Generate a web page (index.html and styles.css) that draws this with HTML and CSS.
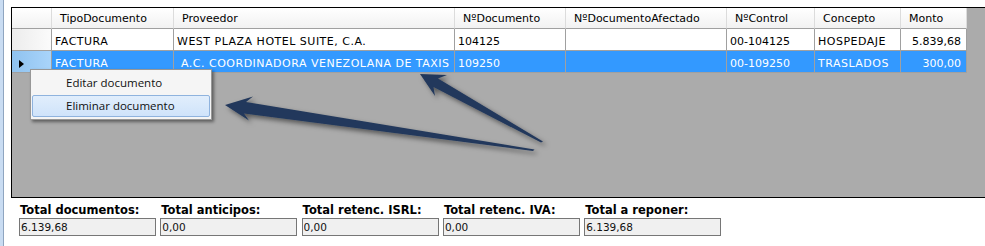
FILE: index.html
```html
<!DOCTYPE html>
<html lang="es">
<head>
    <meta charset="UTF-8">
    <title>Documentos</title>
    <link rel="stylesheet" href="styles.css">
</head>
<body>
    <div class="window">
        <div class="edge"></div>
        <div class="content">
            <div class="grid">
                <div class="grid-row header">
                    <div class="cell row-head"></div>
                    <div class="cell">TipoDocumento</div>
                    <div class="cell">Proveedor</div>
                    <div class="cell">NºDocumento</div>
                    <div class="cell">NºDocumentoAfectado</div>
                    <div class="cell">NºControl</div>
                    <div class="cell">Concepto</div>
                    <div class="cell">Monto</div>
                </div>
                <div class="grid-row">
                    <div class="cell row-head"></div>
                    <div class="cell txt">FACTURA</div>
                    <div class="cell txt">WEST PLAZA HOTEL SUITE, C.A.</div>
                    <div class="cell">104125</div>
                    <div class="cell"></div>
                    <div class="cell">00-104125</div>
                    <div class="cell txt">HOSPEDAJE</div>
                    <div class="cell num">5.839,68</div>
                </div>
                <div class="grid-row selected">
                    <div class="cell row-head"><span class="pointer"></span></div>
                    <div class="cell txt">FACTURA</div>
                    <div class="cell txt">&nbsp;A.C. COORDINADORA VENEZOLANA DE TAXIS</div>
                    <div class="cell">109250</div>
                    <div class="cell"></div>
                    <div class="cell">00-109250</div>
                    <div class="cell txt">TRASLADOS</div>
                    <div class="cell num">300,00</div>
                </div>
            </div>

            <div class="totals">
                <div class="total">
                    <label>Total documentos:</label>
                    <input type="text" readonly value="6.139,68">
                </div>
                <div class="total">
                    <label>Total anticipos:</label>
                    <input type="text" readonly value="0,00">
                </div>
                <div class="total">
                    <label>Total retenc. ISRL:</label>
                    <input type="text" readonly value="0,00">
                </div>
                <div class="total">
                    <label>Total retenc. IVA:</label>
                    <input type="text" readonly value="0,00">
                </div>
                <div class="total">
                    <label>Total a reponer:</label>
                    <input type="text" readonly value="6.139,68">
                </div>
            </div>
        </div>
    </div>

    <div class="context-menu">
        <div class="menu-item">Editar documento</div>
        <div class="menu-item active">Eliminar documento</div>
    </div>

    <svg class="arrows" width="985" height="246" viewBox="0 0 985 246">
        <defs>
            <filter id="shadow" x="-20%" y="-20%" width="140%" height="140%">
                <feDropShadow dx="3" dy="3" stdDeviation="2.5" flood-color="#000" flood-opacity="0.5"/>
            </filter>
        </defs>
        <g fill="#22385b" filter="url(#shadow)">
            <!-- arrow to menu item -->
            <polygon points="225,105 253,96.5 246,102 534.5,149.5 533,151 244,113.5 249,120.5"/>
            <!-- arrow to selected row -->
            <polygon points="420,74 447,75 438,78.5 543,141.5 541,142.5 433.5,87 435,96"/>
        </g>
    </svg>
</body>
</html>
```

FILE: styles.css
```css
body {
    position: relative;
    margin: 0;
    width: 985px;
    height: 246px;
    overflow: hidden;
    background-color: #fff;
    font-family: "DejaVu Sans", Verdana, sans-serif;
    font-size: 11px;
    color: #000;
}
.window {
    display: flex;
    height: 100%;
}
.edge {
    width: 3px;
    background-color: #c9dcf2;
    border-right: 1px solid #8fa5c0;
}
.content {
    flex: 1;
    padding: 7px 0 0 7px;
}
.grid {
    height: 191px;
    box-sizing: border-box;
    border: 1px solid #000;
    border-right: none;
    background-color: #ababab;
}
.grid-row {
    display: grid;
    grid-template-columns: 40px 122px 281px 111px 161px 88px 86px 66px;
    height: 22px;
    background-color: #fff;
    width: 955px;
}
.cell {
    box-sizing: border-box;
    border-right: 1px solid #a0a0a0;
    border-bottom: 1px solid #a0a0a0;
    padding: 4px 3px 0;
    line-height: 17px;
    white-space: nowrap;
    overflow: hidden;
}
.cell.txt {
    letter-spacing: 0.5px;
}
.cell.num {
    text-align: right;
    padding-right: 5px;
}
.header {
    height: 21px;
    background: linear-gradient(#ffffff, #f1f1f1);
}
.header .cell {
    padding: 2px 3px 0 8px;
    line-height: 18px;
    border-right-color: #dcdcdc;
}
.row-head {
    background: linear-gradient(to right, #ececec, #fbfbfb);
    border-right-color: #a0a0a0;
}
.header .row-head {
    background: transparent;
}
.selected {
    background-color: #3399ff;
    color: #fff;
}
.selected .row-head {
    background: linear-gradient(to right, #8fc2ef, #a9d4fa);
    padding-left: 7px;
}
.pointer {
    display: inline-block;
    width: 0;
    height: 0;
    border-left: 5px solid #000;
    border-top: 4px solid transparent;
    border-bottom: 4px solid transparent;
    vertical-align: middle;
}
.totals {
    display: grid;
    grid-template-columns: repeat(5, 137px);
    column-gap: 4.3px;
    padding: 5px 0 0 8px;
}
.total label {
    display: block;
    margin: 0 0 1px 1px;
    font-weight: bold;
    font-size: 11.5px;
    line-height: 14px;
}
.total input {
    display: block;
    width: 137px;
    height: 18px;
    box-sizing: border-box;
    margin: 0;
    padding: 0 1px;
    border: 1px solid #767676;
    background-color: #f0f0f0;
    font-family: "DejaVu Sans", Verdana, sans-serif;
    font-size: 10.5px;
    color: #111;
    outline: none;
}
.context-menu {
    position: absolute;
    left: 30px;
    top: 69px;
    width: 182px;
    box-sizing: border-box;
    padding: 1px;
    border: 1px solid #979797;
    background-color: #f5f5f5;
    box-shadow: 2px 2px 3px rgba(0, 0, 0, 0.45);
    font-family: "Open Sans", "Segoe UI", sans-serif;
    font-size: 11.5px;
    color: #111;
}
.menu-item {
    height: 22px;
    box-sizing: border-box;
    margin: 1px 0;
    padding-left: 33px;
    line-height: 20px;
    border: 1px solid transparent;
    border-radius: 2px;
}
.menu-item.active {
    border-color: #8fb3de;
    background: linear-gradient(#e1eefc, #cfe3fa);
}
.arrows {
    position: absolute;
    left: 0;
    top: 0;
    pointer-events: none;
}
```
